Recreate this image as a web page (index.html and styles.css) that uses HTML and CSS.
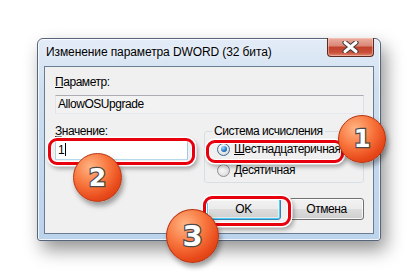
FILE: index.html
```html
<!DOCTYPE html>
<html lang="ru">
<head>
    <meta charset="UTF-8">
    <title>Изменение параметра DWORD (32 бита)</title>
    <link rel="stylesheet" href="styles.css">
</head>
<body>
    <div class="dialog">
        <!-- Title bar -->
        <div class="titlebar">
            <span class="title">Изменение параметра DWORD (32 бита)</span>
            <div class="close">
                <svg width="17" height="12" viewBox="0 0 17 12">
                    <path d="M3 1.5 L14 10.5 M14 1.5 L3 10.5" stroke="#3a3a3a" stroke-width="5" stroke-linecap="round"/>
                    <path d="M3 1.5 L14 10.5 M14 1.5 L3 10.5" stroke="#ffffff" stroke-width="3" stroke-linecap="round"/>
                </svg>
            </div>
        </div>

        <!-- Client area -->
        <div class="client">
            <div class="label"><u>П</u>араметр:</div>
            <div class="field readonly">AllowOSUpgrade</div>

            <div class="row">
                <div class="value-col">
                    <div class="label"><u>З</u>начение:</div>
                    <div class="field edit">1<span class="caret"></span></div>
                </div>
                <fieldset class="group">
                    <legend>Система исчисления</legend>
                    <div class="radio-row">
                        <span class="radio checked"></span>
                        <span><u>Ш</u>естнадцатеричная</span>
                    </div>
                    <div class="radio-row">
                        <span class="radio"></span>
                        <span><u>Д</u>есятичная</span>
                    </div>
                </fieldset>
            </div>

            <div class="buttons">
                <div class="btn btn-default">OK</div>
                <div class="btn">Отмена</div>
            </div>
        </div>

        <!-- Annotations -->
        <div class="mark mark-value"></div>
        <div class="mark mark-radio"></div>
        <div class="mark mark-ok"></div>
        <div class="badge badge-1">1</div>
        <div class="badge badge-2">2</div>
        <div class="badge badge-3">3</div>
    </div>
</body>
</html>
```

FILE: styles.css
```css
/* Base */
* {
    box-sizing: border-box;
    margin: 0;
    padding: 0;
}

html, body {
    min-height: 100%;
}

body {
    min-height: 100vh;
    background: #ffffff;
    font-family: 'Liberation Sans', Arial, sans-serif;
    font-size: 12px;
    letter-spacing: -0.45px;
    color: #000;
}

u {
    text-decoration: underline;
    text-underline-offset: 1px;
}

/* Window frame */
.dialog {
    position: relative;
    width: 344px;
    height: 203px;
    margin: 38px 0 0 37px;
    padding: 0 6px 6px;
    border: 1px solid #56657a;
    border-radius: 6px 6px 3px 3px;
    background: linear-gradient(#e3ecf7, #cfdff0 25%, #c2d7ee 70%, #bcd3ec);
    box-shadow: inset 0 0 0 1px rgba(255,255,255,0.75), 5px 9px 18px rgba(0,0,0,0.42);
    display: flex;
    flex-direction: column;
}

.titlebar {
    height: 27px;
    display: flex;
    align-items: flex-start;
}

.title {
    margin: 6px 0 0 2px;
    font-size: 12px;
    letter-spacing: -0.1px;
    line-height: 15px;
    text-shadow: 0 0 6px rgba(255,255,255,0.9);
}

.close {
    margin: -1px 0 0 auto;
    width: 47px;
    height: 19px;
    border: 1px solid #5c2a22;
    border-top: none;
    border-radius: 0 0 4px 4px;
    background: linear-gradient(#eab0a2, #d98574 45%, #c2402c 50%, #c9503a 80%, #e08a70);
    box-shadow: inset 0 0 0 1px rgba(255,210,200,0.5);
    display: flex;
    align-items: center;
    justify-content: center;
}

/* Client area */
.client {
    flex: 1;
    background: #f0f0f0;
    border: 1px solid #6a7c92;
    padding: 8px 9px 0 10px;
}

.label {
    line-height: 15px;
}

.field {
    height: 19px;
    border: 1px solid #abadb3;
    border-color: #abadb3 #dbdfe6 #e3e9ef #e2e3ea;
    padding: 0 2px;
    line-height: 17px;
    white-space: nowrap;
}

.readonly {
    margin-top: 5px;
    background: #f2f2f2;
}

.edit {
    margin-top: 1px;
    height: 20px;
    line-height: 18px;
    background: #ffffff;
    border-color: #3d7bad #a4c9e3 #b7d9ed #b5cfe7;
}

.caret {
    display: inline-block;
    width: 1px;
    height: 13px;
    background: #000;
    vertical-align: -2px;
    margin-left: 1px;
}

.row {
    display: flex;
    gap: 16px;
    margin-top: 10px;
}

.value-col {
    width: 133px;
}

/* Group box */
.group {
    width: 160px;
    height: 59px;
    border: 1px solid #d5dfe5;
    border-radius: 3px;
    padding: 0 0 0 12px;
    min-width: 0;
}

.group legend {
    margin-left: -5px;
    padding: 0 2px;
    line-height: 15px;
}

.radio-row {
    display: flex;
    align-items: center;
    gap: 4px;
    height: 14px;
    margin-top: 3px;
    white-space: nowrap;
}

.radio-row + .radio-row {
    margin-top: 7px;
}

.radio {
    width: 13px;
    height: 13px;
    border-radius: 50%;
    border: 1px solid #8e8f8f;
    background: radial-gradient(circle at 40% 35%, #ffffff, #e4e4e4 60%, #cfcfcf);
    position: relative;
    flex: none;
}

.radio.checked {
    border-color: #3a6a92;
}

.radio.checked::after {
    content: '';
    position: absolute;
    left: 2.5px;
    top: 2.5px;
    width: 6px;
    height: 6px;
    border-radius: 50%;
    background: radial-gradient(circle at 35% 30%, #a8dcff, #2a7ec9 55%, #0b3f78);
}

/* Buttons */
.buttons {
    display: flex;
    justify-content: flex-end;
    gap: 8px;
    margin-top: 15px;
}

.btn {
    width: 75px;
    height: 22px;
    border: 1px solid #707070;
    border-radius: 3px;
    background: linear-gradient(#f2f2f2, #ebebeb 50%, #dddddd 50%, #cfcfcf);
    box-shadow: inset 0 0 0 1px rgba(255,255,255,0.8);
    text-align: center;
    line-height: 20px;
}

.btn-default {
    border-color: #3c7fb1;
    box-shadow: inset 0 0 0 1px #48d0f7, inset 0 0 0 2px rgba(255,255,255,0.5);
}

/* Annotation marks */
.mark {
    position: absolute;
    border: 3px solid #e8000c;
    border-radius: 9px;
    box-shadow: 0 0 0 1.5px #ffffff, 2px 3px 4px 1px rgba(0,0,0,0.3), inset 0 0 0 1px #ffffff;
}

.mark-value {
    left: 10px;
    top: 99px;
    width: 147px;
    height: 27px;
}

.mark-radio {
    left: 168px;
    top: 101px;
    width: 138px;
    height: 23px;
}

.mark-ok {
    left: 165px;
    top: 157px;
    width: 88px;
    height: 30px;
}

.badge {
    position: absolute;
    border-radius: 50%;
    border: 1px solid #b8330f;
    background: radial-gradient(circle at 35% 28%, #ffb584, #f8763e 40%, #e8491a 70%, #c9320c);
    box-shadow: 2px 4px 5px rgba(0,0,0,0.35);
    color: #ffffff;
    font-family: 'DejaVu Sans', sans-serif;
    font-weight: bold;
    letter-spacing: 0;
    text-align: center;
    -webkit-text-stroke: 2.5px #4a4a4a;
    paint-order: stroke fill;
}

.badge-1 {
    left: 300px;
    top: 76px;
    width: 48px;
    height: 48px;
    font-size: 24px;
    line-height: 46px;
}

.badge-2 {
    left: 35px;
    top: 114px;
    width: 49px;
    height: 49px;
    font-size: 25px;
    line-height: 47px;
}

.badge-3 {
    left: 128px;
    top: 170px;
    width: 53px;
    height: 54px;
    font-size: 29px;
    line-height: 52px;
}
```
